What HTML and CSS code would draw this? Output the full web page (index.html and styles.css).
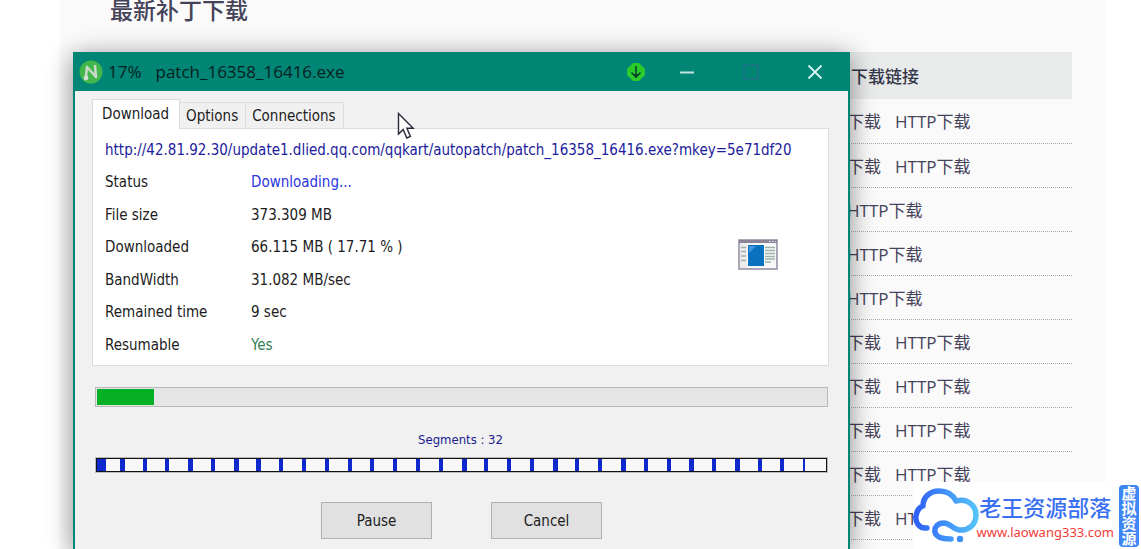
FILE: index.html
```html
<!DOCTYPE html>
<html lang="zh-CN">
<head>
<meta charset="utf-8">
<title>最新补丁下载</title>
<link rel="stylesheet" href="styles.css">
</head>
<body>
<main class="page">
  <h1 class="page-title">最新补丁下载</h1>
  <table class="patches">
    <thead><tr><th scope="col">下载链接</th></tr></thead>
    <tbody>
      <tr><td><a href="#">下载</a><a href="#">HTTP下载</a></td></tr>
      <tr><td><a href="#">下载</a><a href="#">HTTP下载</a></td></tr>
      <tr><td><a href="#">HTTP下载</a></td></tr>
      <tr><td><a href="#">HTTP下载</a></td></tr>
      <tr><td><a href="#">HTTP下载</a></td></tr>
      <tr><td><a href="#">下载</a><a href="#">HTTP下载</a></td></tr>
      <tr><td><a href="#">下载</a><a href="#">HTTP下载</a></td></tr>
      <tr><td><a href="#">下载</a><a href="#">HTTP下载</a></td></tr>
      <tr><td><a href="#">下载</a><a href="#">HTTP下载</a></td></tr>
      <tr><td><a href="#">下载</a><a href="#">HTTP下载</a></td></tr>
    </tbody>
  </table>
</main>

<section class="dialog" aria-label="Download progress">
  <header class="titlebar">
    <svg class="app-logo" viewBox="0 0 24 24" aria-hidden="true">
      <circle cx="12" cy="12" r="11.5" fill="#41b64b"/>
      <path d="M8 7l9 10M8 7l-1 9M16 6l1 11" fill="none" stroke="#c9d8c8" stroke-width="2.6" stroke-linecap="round"/>
      <circle cx="7" cy="18" r="2.4" fill="#d5dfd3"/>
    </svg>
    <span class="percent">17%</span>
    <span class="file">patch_16358_16416.exe</span>
    <div class="window-buttons">
      <button class="tray" type="button" aria-label="Download to tray">
        <svg width="20" height="20" viewBox="0 0 20 20"><path d="M7 1h6l6 6v6l-6 6H7l-6-6V7z" fill="#2bcb2c"/><path d="M10 4v11M5.500 10.500L10 15l4.500-4.500" fill="none" stroke="#06462a" stroke-width="1.600"/><path d="M7 12h6l-3 4z" fill="#06462a"/></svg>
      </button>
      <button type="button" aria-label="Minimize">
        <svg width="16" height="16" viewBox="0 0 16 16"><path d="M1 8.500h14" stroke="#c3e4de" stroke-width="2"/></svg>
      </button>
      <button type="button" aria-label="Maximize" disabled>
        <svg width="16" height="16" viewBox="0 0 16 16"><rect x="1" y="1" width="14" height="14" fill="none" stroke="#1b7088" stroke-width="1.500"/></svg>
      </button>
      <button type="button" aria-label="Close">
        <svg width="16" height="16" viewBox="0 0 16 16"><path d="M1.500 1.500l13 13M14.500 1.500l-13 13" stroke="#d8f3f4" stroke-width="1.800"/></svg>
      </button>
    </div>
  </header>

  <div class="body">
    <div class="tabs" role="tablist">
      <button class="tab selected" type="button" role="tab" aria-selected="true">Download</button>
      <button class="tab" type="button" role="tab" aria-selected="false">Options</button>
      <button class="tab" type="button" role="tab" aria-selected="false">Connections</button>
    </div>
    <div class="details" role="tabpanel">
      <p class="url">http://42.81.92.30/update1.dlied.qq.com/qqkart/autopatch/patch_16358_16416.exe?mkey=5e71df20</p>
      <div class="info">
        <dl class="facts">
          <dt>Status</dt><dd class="status">Downloading...</dd>
          <dt>File size</dt><dd>373.309 MB</dd>
          <dt>Downloaded</dt><dd>66.115 MB ( 17.71 % )</dd>
          <dt>BandWidth</dt><dd>31.082 MB/sec</dd>
          <dt>Remained time</dt><dd>9 sec</dd>
          <dt>Resumable</dt><dd class="yes">Yes</dd>
        </dl>
        <svg class="file-icon" width="40" height="31" viewBox="0 0 40 31" aria-hidden="true">
          <rect x="1" y="1" width="38" height="29" fill="#f7f8f9" stroke="#9389a0" stroke-width="1.500"/>
          <path d="M1 1h38v3H1z" fill="#8b8396"/>
          <path d="M31 2.500h2M34 2.500h2M37 2.500h1" stroke="#ddd8e5"/>
          <path d="M2 4h7v25H2z" fill="#ececef"/>
          <path d="M3 8.500h5M3 12.500h5M3 17h5M3 21.500h5" stroke="#9fb0aa" stroke-width="1.500"/>
          <path d="M10 6h16v21H10z" fill="#0872c0"/>
          <path d="M11 7h7l-7 7z" fill="#4695dc"/>
          <path d="M27 8.500h10M27 11.500h10M27 14.500h10M27 17.500h10M27 20h10M27 23h6" stroke="#9db3a6" stroke-width="1.500"/>
        </svg>
      </div>
    </div>

    <progress class="total" value="7.8" max="100" aria-label="Download progress"></progress>
    <p class="segments-label">Segments : 32</p>
    <div class="segments">
      <i class="first"></i><i class="wide"></i><i></i><i></i><i class="wide"></i><i></i><i class="wide"></i><i class="wide"></i>
      <i></i><i></i><i></i><i></i><i></i><i></i><i></i><i></i>
      <i class="wide"></i><i></i><i></i><i></i><i class="wide"></i><i></i><i></i><i class="wide"></i>
      <i></i><i></i><i class="wide"></i><i></i><i class="wide"></i><i></i><i></i><i class="last"></i>
    </div>
    <div class="actions">
      <button type="button">Pause</button>
      <button type="button">Cancel</button>
    </div>
  </div>
</section>

<svg class="cursor" width="18" height="28" viewBox="0 0 18 28" aria-hidden="true">
  <path d="M1.500 1.500v20.500l4.700-4.500 3.600 8.500 3.600-1.600-3.500-8.200h6.300z" fill="#fff" stroke="#2b2638" stroke-width="1.400"/>
</svg>

<aside class="watermark">
  <svg class="cloud" width="66" height="56" viewBox="0 0 66 56" aria-hidden="true">
    <defs><linearGradient id="sky" x1="0" y1="0" x2="1" y2="0"><stop offset="0" stop-color="#2f60f7"/><stop offset="1" stop-color="#55c2fa"/></linearGradient></defs>
    <path d="M14 40C6 41 2 34 3 28C4 22 7 19 10 18C10 9 17 3 26 3C34 3 40 7 43 13C54 10 63 17 63 27C63 37 55 43 46 42C39 41 37 35 31 35C25 35 21 39 22 44C23 49 28 51 38 51" fill="none" stroke="url(#sky)" stroke-width="5.500" stroke-linecap="round" stroke-linejoin="round"/>
    <circle cx="47" cy="51" r="3.200" fill="#3c90f8"/>
  </svg>
  <div class="brand">
    <strong>老王资源部落</strong>
    <a href="#">www.laowang333.com</a>
  </div>
  <span class="badge">虚拟资源</span>
</aside>
</body>
</html>
```
FILE: styles.css
```css
* { box-sizing: border-box; }

body {
  position: relative;
  height: 100vh;
  margin: 0;
  overflow: hidden;
  background: #fff;
  font-family: "Open Sans", "Noto Sans CJK SC", sans-serif;
}

p, dl, dd, h1 { margin: 0; }

button {
  margin: 0;
  padding: 0;
  border: 0;
  background: none;
  color: inherit;
  font: inherit;
}

.page {
  min-height: 100%;
  margin: 0 35px 0 60px;
  padding: 0 34px 0 50px;
  background: #fafafa;
}

.page-title {
  height: 52px;
  color: #45435a;
  font-size: 23px;
  line-height: 20px;
  font-weight: 500;
}

.patches {
  width: 100%;
  border-collapse: collapse;
  color: #45435a;
  font-size: 17px;
}

.patches th {
  height: 47px;
  padding: 0 0 0 741px;
  background: #e9ebea;
  color: #34364a;
  text-align: left;
  font-weight: 500;
}

.patches td {
  height: 44px;
  padding: 0 0 0 737px;
  border-bottom: 1px dotted #aaa;
  white-space: nowrap;
}

.patches a {
  margin-right: 14px;
  color: inherit;
  text-decoration: none;
}

.dialog {
  position: absolute;
  top: 52px;
  right: 291px;
  left: 73px;
  border: 1px solid #018574;
  border-width: 0 2px;
  background: #f1f1f1;
  box-shadow: 0 4px 24px rgba(0, 0, 0, 0.45);
  color: #1c1c22;
  font-family: "DejaVu Sans Condensed", "Noto Sans", sans-serif;
  font-size: 15px;
}

.titlebar {
  display: flex;
  align-items: center;
  height: 39px;
  padding: 0 20px 0 4px;
  background: #018574;
  color: #06211f;
  font-family: "Open Sans", sans-serif;
  font-size: 17px;
}

.app-logo { width: 24px; height: 24px; }
.percent { margin-left: 5px; }
.file { margin-left: 14px; }

.window-buttons {
  display: flex;
  gap: 24px;
  margin-left: auto;
}

.window-buttons button {
  display: grid;
  place-items: center;
  width: 40px;
  height: 39px;
}

.window-buttons .tray { margin-right: -13px; }
.window-buttons button:last-child { margin-right: -7px; }

.body { padding: 8px 19px 10px 17px; }

.tabs {
  display: flex;
  align-items: flex-end;
}

.tab {
  height: 26px;
  padding: 0 7px 0 6px;
  border: 1px solid #dcdcdc;
  border-bottom: 0;
  border-left: 0;
  background: #f0f0f0;
}

.tab.selected {
  z-index: 1;
  height: 30px;
  margin-bottom: -1px;
  padding: 0 10px 2px 9px;
  border-left: 1px solid #dcdcdc;
  background: #fff;
}

.details {
  height: 238px;
  padding: 10px 24px 5px 12px;
  border: 1px solid #dcdcdc;
  background: #fff;
}

.url {
  overflow: hidden;
  color: #1c1c9c;
  line-height: 22px;
  white-space: nowrap;
}

.info {
  display: flex;
  align-items: center;
  justify-content: space-between;
  padding-top: 5px;
}

.facts {
  display: grid;
  grid-template-columns: 146px auto;
  grid-template-rows: repeat(6, 1fr);
  align-items: center;
  height: 195px;
}

.file-icon { margin: 0 26px 18px 0; }
.status { color: #2b35e0; }
.yes { color: #2f8055; }

.total {
  display: block;
  width: calc(100% - 4px);
  height: 20px;
  margin: 21px 1px 0 3px;
  padding: 1px;
  border: 1px solid #b9b9b9;
  background: #e5e5e5;
  appearance: none;
}

.total::-webkit-progress-bar { background: #e5e5e5; }
.total::-webkit-progress-value { background: #06b025; }

.segments-label {
  margin-top: 24px;
  color: #1c1c8c;
  font-size: 13px;
  line-height: 18px;
  text-align: center;
}

.segments {
  display: grid;
  grid-template-columns: repeat(32, 1fr);
  height: 14px;
  margin: 9px 2px 0 4px;
  border: 1px solid #111;
  outline: 1px solid #bbb;
  background: #f8f8fa;
}

.segments i { border-left: 4px solid #1029cc; }
.segments .wide { border-left-width: 5px; }
.segments .first { border-left-width: 9px; }
.segments .last { border-left-width: 2px; }

.actions {
  display: flex;
  justify-content: center;
  gap: 59px;
  margin: 30px 0 0 2px;
}

.actions button {
  width: 111px;
  height: 37px;
  border: 1px solid #b0b0b4;
  background: #e1e1e1;
}

.cursor {
  position: absolute;
  top: 112px;
  left: 397px;
}

.watermark {
  position: absolute;
  right: 0;
  bottom: 0;
  display: flex;
  align-items: center;
  height: 67px;
  padding-right: 2px;
  background: #fff;
}

.brand {
  display: flex;
  flex-direction: column;
  align-items: center;
  margin: 0 5px 0 -2px;
  padding-top: 5px;
}

.brand strong {
  color: #3a70f2;
  font-size: 22px;
  line-height: 28px;
  font-weight: 500;
}

.brand a {
  color: #f23c38;
  font-family: "Noto Sans", sans-serif;
  font-size: 13px;
  line-height: 22px;
  text-decoration: none;
}

.badge {
  width: 20px;
  padding: 1px 2px;
  border-radius: 4px;
  background: #3f86f5;
  color: #fff;
  font-size: 15px;
  line-height: 15px;
  font-weight: 700;
  text-align: center;
  word-break: break-all;
}
```
